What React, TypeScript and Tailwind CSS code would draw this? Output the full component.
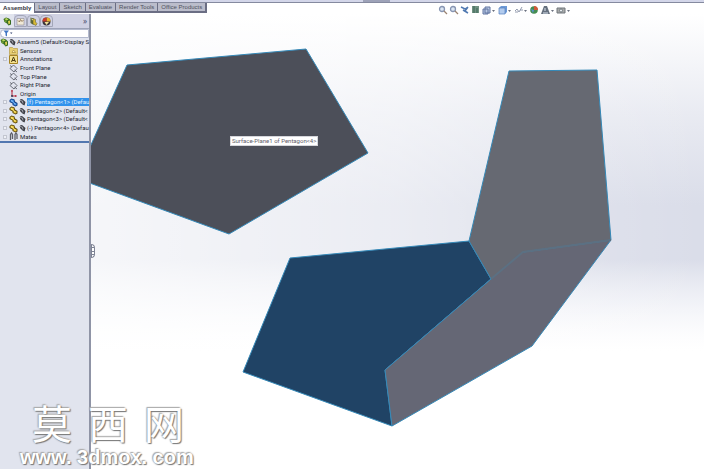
import React from 'react'

const tabs = ['Layout', 'Sketch', 'Evaluate', 'Render Tools', 'Office Products']

type TreeItem = {
    icon: 'folder' | 'note' | 'plane' | 'origin' | 'part' | 'mates'
    label: string
    visible?: boolean
    expandable?: boolean
    selected?: boolean
}

const treeItems: TreeItem[] = [
    { icon: 'folder', label: 'Sensors' },
    { icon: 'note', label: 'Annotations', expandable: true },
    { icon: 'plane', label: 'Front Plane' },
    { icon: 'plane', label: 'Top Plane' },
    { icon: 'plane', label: 'Right Plane' },
    { icon: 'origin', label: 'Origin' },
    { icon: 'part', label: '(f) Pentagon<1> (Defau', visible: true, expandable: true, selected: true },
    { icon: 'part', label: 'Pentagon<2> (Default<', visible: true, expandable: true },
    { icon: 'part', label: 'Pentagon<3> (Default<', visible: true, expandable: true },
    { icon: 'part', label: '(-) Pentagon<4> (Defau', visible: true, expandable: true },
    { icon: 'mates', label: 'Mates', expandable: true },
]

const AssemblyIcon = () => (
    <svg viewBox="0 0 18 18" className="size-[9px] shrink-0">
        <path d="M1 4l5-3 6 2 4 4v8l-5 2-3-4-5-3z" fill="#356b20" />
        <path d="M3 4l4-2 4 3-4 2z" fill="#b9d65a" />
        <path d="M10 8l4-1v6l-3 2z" fill="#d9cf4e" />
        <path d="M3 6l4 2v3l-4-2z" fill="#79a83a" />
    </svg>
)

const PartIcon = ({ selected }: { selected?: boolean }) => (
    <svg viewBox="0 0 18 18" className="size-[9px] shrink-0">
        <path d="M1 4l4-3 6 2 1 4 5 3v5l-4 2-6-3v-3l-6-3z" fill={selected ? '#123f86' : '#5e4a0c'} />
        <path d="M3 4l3-1 4 2v4l5 2v3l-3 1-3-2v-3L3 7z" fill={selected ? '#3d8be0' : '#e6c53a'} />
        <path d="M4 5l4 2M9 9l4 3" stroke={selected ? '#a9d1fa' : '#fff3a6'} strokeWidth="1.6" />
    </svg>
)

const EyeIcon = () => (
    <svg viewBox="0 0 14 16" className="h-2 w-[7px] shrink-0">
        <path d="M2 3l4-1 7 6-2 7-4-2-5-5z" fill="#3b3c43" />
        <path d="M1 5l6 1 1 5" stroke="#a5a7b2" strokeWidth="2" fill="none" />
    </svg>
)

const ItemIcon = ({ item }: { item: TreeItem }) => {
    if (item.icon === 'part') return <PartIcon selected={item.selected} />

    return (
        <svg viewBox="0 0 18 18" className="size-[9px] shrink-0" fill="none">
            {item.icon === 'folder' && (
                <>
                    <path d="M1 3h6l2 2h8v12H1z" fill="#e8cf72" stroke="#a68424" />
                    <path d="M6 13l3-5 4 5z" fill="#fff4bd" stroke="#8a6c18" />
                </>
            )}
            {item.icon === 'note' && (
                <>
                    <path d="M1 1h16v16H1z" fill="#f3e190" stroke="#a68424" strokeWidth="2" />
                    <path d="M5 14l4-10 4 10M6 11h6" stroke="#4c3d12" strokeWidth="2" />
                </>
            )}
            {item.icon === 'plane' && (
                <path d="M9 2l7 7-6 7-8-7zM2 3l4 3M11 12l5 4" stroke="#4d505a" strokeWidth="1.6" />
            )}
            {item.icon === 'origin' && (
                <>
                    <path d="M6 2v12h9" stroke="#b3263b" strokeWidth="2" />
                    <path d="M6 1l-2 4h4zM16 14l-4-2v4z" fill="#b3263b" />
                    <circle cx="6" cy="14" r="2" fill="#34384e" />
                </>
            )}
            {item.icon === 'mates' && (
                <path d="M3 16V5l2-3 2 3v9M12 16V5l2-3 2 3v9" stroke="#5d6069" strokeWidth="2.6" />
            )}
        </svg>
    )
}

const FeatureTree = () => (
    <aside className="w-[91px] shrink-0 border-r-2 border-[#8f94a6] bg-[#e1e4ee]">
        <div className="flex h-[15px] items-center justify-between border-b border-[#9da3b8] bg-[#cfd1e3] pr-[2px]">
            <div className="flex h-full items-center">
                <button aria-label="Feature tree" className="flex h-full w-[14px] items-center justify-center bg-[#e1e4ee]">
                    <AssemblyIcon />
                </button>
                <button aria-label="Properties" className="flex h-3 w-[13px] items-center justify-center rounded-t-sm border border-[#a3a6b8]">
                    <svg viewBox="0 0 18 18" className="size-[9px]">
                        <path d="M2 3h14v13H2z" fill="#f1ead8" stroke="#7e7b80" />
                        <path d="M4 7l3 3 2-5 3 4 3-3" fill="none" stroke="#8d7352" strokeWidth="1.8" />
                    </svg>
                </button>
                <button aria-label="Configurations" className="flex h-3 w-[13px] items-center justify-center rounded-t-sm border border-[#a3a6b8]">
                    <svg viewBox="0 0 18 18" className="size-[9px]">
                        <path d="M3 1l6 2v13l-6-4z" fill="#5d6939" />
                        <path d="M8 3l5 2v5l3 3-2 4-6-3z" fill="#d8b933" stroke="#55502b" />
                        <path d="M5 4l3 2" stroke="#e6e6b4" strokeWidth="2" />
                    </svg>
                </button>
                <button aria-label="Display" className="flex h-3 w-[13px] items-center justify-center rounded-t-sm border border-[#a3a6b8]">
                    <svg viewBox="0 0 18 18" className="size-[9px]">
                        <circle cx="9" cy="9" r="8" fill="#39343a" />
                        <path d="M9 9V1a8 8 0 0 1 8 8z" fill="#e8b22e" />
                        <path d="M9 9H1a8 8 0 0 1 8-8z" fill="#c93a2a" />
                        <path d="M5 10h9l-5 6z" fill="#efdf9b" />
                    </svg>
                </button>
            </div>
            <button aria-label="Expand" className="text-[8px] leading-none text-[#4b5070]">»</button>
        </div>

        <label className="flex h-[9px] items-center gap-px rounded-l-full border border-[#b4bace] bg-white pl-[2px]">
            <svg viewBox="0 0 20 14" className="h-[7px] w-[10px] shrink-0">
                <path d="M1 1h11L8 6v7l-3-2V6z" fill="#4277c4" />
                <path d="M14 5h5l-2.500 3z" fill="#33436f" />
            </svg>
            <input aria-label="Filter" className="h-full w-full min-w-0 bg-transparent text-[6px] outline-none" />
        </label>

        <ul className="flex h-[105px] flex-col border-b-2 border-[#5277b0] font-['Roboto',sans-serif] text-[6px] leading-[8px] text-[#22242e]">
            <li className="flex min-h-0 flex-1 items-center whitespace-pre">
                <AssemblyIcon />
                <EyeIcon />
                <span className="pl-px">Assem5 (Default&lt;Display S</span>
            </li>
            {treeItems.map((item) => (
                <li key={item.label} className="flex min-h-0 flex-1 items-center whitespace-nowrap">
                    <span className="flex w-[9px] shrink-0 justify-center">
                        {item.expandable && <span className="size-1 border border-[#c3c6d0] bg-[#eef0f6]" />}
                    </span>
                    <ItemIcon item={item} />
                    {item.visible && <span className="pl-px"><EyeIcon /></span>}
                    <button className={item.selected ? 'ml-px grow bg-[#3192ec] text-left text-[#e4f3ff]' : item.visible ? 'pl-px' : 'pl-[2px]'}>
                        {item.label}
                    </button>
                </li>
            ))}
        </ul>
    </aside>
)

const ViewToolbar = () => (
    <svg viewBox="0 0 132 10" className="h-[10px] w-[132px]" fill="none" role="img" aria-label="View tools">
        <g stroke="#8795b2" strokeWidth="1.3">
            <circle cx="4" cy="4" r="2.500" fill="#dce6f2" />
            <path d="M6 6l3 3" stroke="#9a8372" />
            <circle cx="15" cy="4" r="2.500" fill="#dce6f2" />
            <path d="M17 6l3 3" stroke="#9a8372" />
        </g>
        <path d="M23 2l4 2 3-2M25 5l5 3M30 2l-3 4" stroke="#5079b1" strokeWidth="1.500" />
        <path d="M34 1h7v7h-7z" fill="#719282" />
        <path d="M36 1v7M39 3v5" stroke="#3b6457" />
        <path d="M47 2h5v6h-5zM45 4h5v5h-5z" fill="#b9c9e4" stroke="#6075a0" />
        <path d="M61 3l2-2h6v6l-2 2h-6z" fill="#6d9ad7" />
        <path d="M61 3h6v6h-6z" fill="#b2cbed" stroke="#537fbd" strokeWidth=".7" />
        <path d="M77 6l2-2 2 3 3-5M77 7h3M82 5h3" stroke="#939bae" />
        <circle cx="96" cy="5" r="3.800" fill="#458d51" />
        <path d="M96 5V1a4 4 0 0 1 4 4z" fill="#cf5a3b" />
        <path d="M93 4l3 1-1 3z" fill="#5a8fce" />
        <path d="M103 9l3-8h3l3 8z" fill="#65707e" />
        <path d="M107 3v3M105 8h5" stroke="#dce4f0" />
        <path d="M119 3h8v5h-8z" fill="#a8aaa9" stroke="#70777c" />
        <circle cx="123" cy="5.500" r="1.500" fill="#e9edf0" stroke="#59636b" strokeWidth=".7" />
        <path d="M54 5h3l-1.500 2zM70 5h3l-1.500 2zM86 5h3l-1.500 2zM113 5h3l-1.500 2zM129 5h3l-1.500 2z" fill="#6c7280" />
    </svg>
)

const Model = () => (
    <svg viewBox="91 14 613 455" preserveAspectRatio="xMinYMin slice" className="absolute inset-0 size-full" role="img" aria-label="Pentagon assembly">
        <defs>
            <linearGradient id="sky" x1="0" y1="0" x2="0" y2="1">
                <stop offset="0" stopColor="#dadde9" stopOpacity="0" />
                <stop offset=".22" stopColor="#dadde9" stopOpacity=".6" />
                <stop offset=".42" stopColor="#dadde9" />
                <stop offset=".54" stopColor="#dadde9" />
                <stop offset=".64" stopColor="#e9ebf3" stopOpacity=".6" />
                <stop offset=".74" stopColor="#f4f5fa" stopOpacity="0" />
            </linearGradient>
            <linearGradient id="fade" x1="0" y1="0" x2="1" y2="0">
                <stop offset="0" stopColor="#fff" stopOpacity=".75" />
                <stop offset=".5" stopColor="#fff" stopOpacity=".45" />
                <stop offset=".85" stopColor="#fff" stopOpacity=".1" />
                <stop offset="1" stopColor="#fff" stopOpacity="0" />
            </linearGradient>
        </defs>
        <path d="M91 14h613v455H91z" fill="#fff" />
        <path d="M91 14h613v455H91z" fill="url(#sky)" />
        <path d="M91 14h613v455H91z" fill="url(#fade)" />
        <g stroke="#3589b8" strokeWidth="1" strokeLinejoin="round">
            <path d="M127 65L306 49L368 153L229 234L76 178z" fill="#4c4f59" />
            <path d="M290 258L469 241L491 279L385 370L392 426L243 372z" fill="#204365" />
            <path d="M491 279L523 252L611 240L532 346L392 426L385 370z" fill="#656775" />
            <path d="M509 71L597 70L611 240L523 252L491 279L469 241z" fill="#666972" />
        </g>
        <path d="M491 279L523 252L611 240" fill="none" stroke="#5c7082" strokeWidth="2" />
    </svg>
)

const Watermark = () => (
    <div className="pointer-events-none absolute bottom-0 left-5 text-white [text-shadow:1px_1px_1px_#777,-1px_-1px_1px_#aaa,0_0_2px_#999]">
        <div className="flex gap-4 pl-3 font-['Noto_Sans_CJK_SC',sans-serif] text-[40px] leading-[46px]">
            <span>莫</span>
            <span>西</span>
            <span>网</span>
        </div>
        <p className="whitespace-nowrap font-['Liberation_Sans',sans-serif] text-[20px] font-bold leading-6">www. 3dmox. com</p>
    </div>
)

const App = () => {
    return (
        <div className="relative flex min-h-screen flex-col overflow-hidden bg-white">
            <div className="flex h-[3px] justify-center border-b border-[#858a9f] bg-[#d3d6e9]">
                <div className="ml-12 h-[2px] w-[27px] bg-[#9da2b8]" />
            </div>

            <header className="flex h-[11px] items-start">
                <nav className="flex h-[10px] font-['Liberation_Sans',sans-serif] text-[6px] leading-[8px]">
                    <button className="px-[3px] font-bold text-[#30323c]">Assembly</button>
                    {tabs.map((tab) => (
                        <button key={tab} className="whitespace-nowrap border-b-2 border-l border-[#6b6e84] bg-[#bbbdcb] px-[3px] text-[#4f515e] last:border-r-2">
                            {tab}
                        </button>
                    ))}
                </nav>
            </header>

            <main className="flex grow">
                <FeatureTree />
                <section className="relative grow">
                    <Model />
                    <div className="absolute right-[134px] -top-[9px]">
                        <ViewToolbar />
                    </div>
                    <div className="absolute left-0 top-[230px] flex h-[14px] w-1 flex-col justify-evenly rounded-r-sm border border-[#7f8495] bg-white">
                        <span className="h-px bg-[#7f8495]" />
                        <span className="h-px bg-[#7f8495]" />
                        <span className="h-px bg-[#7f8495]" />
                    </div>
                    <div role="tooltip" className="absolute left-[139px] top-[122px] whitespace-nowrap border border-[#d5d6db] bg-white px-px font-['Roboto',sans-serif] text-[6px] leading-[8px] text-[#5f616b]">
                        Surface-Plane1 of Pentagon&lt;4&gt;
                    </div>
                </section>
            </main>

            <Watermark />
        </div>
    )
}

export default App
